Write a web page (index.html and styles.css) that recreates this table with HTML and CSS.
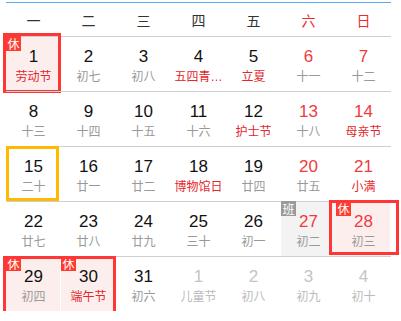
FILE: index.html
```html
<!DOCTYPE html>
<html lang="zh">
<head>
<meta charset="utf-8">
<link rel="stylesheet" href="styles.css">
</head>
<body>
<div class="cal">
  <div class="head">
    <span>一</span><span>二</span><span>三</span><span>四</span><span>五</span><span class="we">六</span><span class="we">日</span>
  </div>
  <div class="week">
    <div class="day hol"><span class="tag">休</span><b class="num">1</b><span class="lun fest">劳动节</span></div>
    <div class="day"><b class="num">2</b><span class="lun">初七</span></div>
    <div class="day"><b class="num">3</b><span class="lun">初八</span></div>
    <div class="day"><b class="num">4</b><span class="lun fest" title="五四青年节">五四青…</span></div>
    <div class="day"><b class="num">5</b><span class="lun fest">立夏</span></div>
    <div class="day wknd"><b class="num">6</b><span class="lun">十一</span></div>
    <div class="day wknd"><b class="num">7</b><span class="lun">十二</span></div>
    <i class="box box-a"></i>
  </div>
  <div class="week">
    <div class="day"><b class="num">8</b><span class="lun">十三</span></div>
    <div class="day"><b class="num">9</b><span class="lun">十四</span></div>
    <div class="day"><b class="num">10</b><span class="lun">十五</span></div>
    <div class="day"><b class="num">11</b><span class="lun">十六</span></div>
    <div class="day"><b class="num">12</b><span class="lun fest">护士节</span></div>
    <div class="day wknd"><b class="num">13</b><span class="lun">十八</span></div>
    <div class="day wknd"><b class="num">14</b><span class="lun fest">母亲节</span></div>
  </div>
  <div class="week">
    <div class="day"><b class="num">15</b><span class="lun">二十</span></div>
    <div class="day"><b class="num">16</b><span class="lun">廿一</span></div>
    <div class="day"><b class="num">17</b><span class="lun">廿二</span></div>
    <div class="day"><b class="num">18</b><span class="lun fest">博物馆日</span></div>
    <div class="day"><b class="num">19</b><span class="lun">廿四</span></div>
    <div class="day wknd"><b class="num">20</b><span class="lun">廿五</span></div>
    <div class="day wknd"><b class="num">21</b><span class="lun fest">小满</span></div>
    <i class="today-box"></i>
  </div>
  <div class="week">
    <div class="day"><b class="num">22</b><span class="lun">廿七</span></div>
    <div class="day"><b class="num">23</b><span class="lun">廿八</span></div>
    <div class="day"><b class="num">24</b><span class="lun">廿九</span></div>
    <div class="day"><b class="num">25</b><span class="lun">三十</span></div>
    <div class="day"><b class="num">26</b><span class="lun">初一</span></div>
    <div class="day wknd work"><span class="tag tag-work">班</span><b class="num">27</b><span class="lun">初二</span></div>
    <div class="day wknd hol"><span class="tag">休</span><b class="num">28</b><span class="lun">初三</span></div>
    <i class="box box-b"></i>
  </div>
  <div class="week">
    <div class="day hol"><span class="tag">休</span><b class="num">29</b><span class="lun">初四</span></div>
    <div class="day hol"><span class="tag">休</span><b class="num">30</b><span class="lun fest">端午节</span></div>
    <div class="day"><b class="num">31</b><span class="lun">初六</span></div>
    <div class="day other"><b class="num">1</b><span class="lun">儿童节</span></div>
    <div class="day other"><b class="num">2</b><span class="lun">初八</span></div>
    <div class="day other"><b class="num">3</b><span class="lun">初九</span></div>
    <div class="day other"><b class="num">4</b><span class="lun">初十</span></div>
    <i class="box box-c"></i>
  </div>
</div>
</body>
</html>
```

FILE: styles.css
```css
html, body {
  margin: 0;
  background: #fff;
}
body {
  font-family: "Liberation Sans", Arial, "Noto Sans CJK SC", sans-serif;
}
.cal {
  margin-left: 6px;
  width: 385px;
  padding-top: 2px;
}
.head {
  display: grid;
  grid-template-columns: repeat(7, 55px);
  height: 33px;
  border-top: 1px solid #56a8f5;
  align-items: center;
  text-align: center;
  font-family: "Noto Sans CJK SC", sans-serif;
  font-size: 14px;
  color: #333;
}
.head .we {
  color: #ee2a2a;
}
.week {
  position: relative;
  display: grid;
  grid-template-columns: repeat(7, 55px);
  height: 54px;
  border-top: 1px solid #cfcfcf;
}
.day {
  position: relative;
  display: flex;
  flex-direction: column;
  align-items: center;
  padding-top: 10px;
  min-width: 0;
}
.num {
  font-weight: normal;
  font-size: 17px;
  line-height: 20px;
  color: #111;
}
.lun {
  margin-top: 2px;
  font-family: "Liberation Sans", "Noto Sans CJK SC", sans-serif;
  font-size: 12px;
  line-height: 16px;
  color: #999;
  white-space: nowrap;
}
.lun.fest {
  color: #e5262b;
}
.wknd .num {
  color: #f03a3e;
}
.other .num {
  color: #c4c4c4;
}
.other .lun {
  color: #bbb;
}
.hol {
  background: #fdeeee;
  box-shadow: inset -1px 0 #fff;
}
.work {
  background: #f3f3f3;
}
.tag {
  position: absolute;
  top: -1px;
  left: 0;
  width: 15px;
  height: 15px;
  background: #ff3b30;
  color: #fff;
  font-family: "Noto Sans CJK SC", sans-serif;
  font-size: 12px;
  line-height: 15px;
  text-align: center;
}
.tag-work {
  background: #9a9a9a;
}
.box, .today-box {
  position: absolute;
  box-sizing: border-box;
  border: 3px solid #ff3636;
  pointer-events: none;
}
.box-a {
  left: -3px;
  top: -4px;
  width: 58px;
  height: 60px;
}
.box-b {
  left: 323px;
  top: -2px;
  width: 70px;
  height: 55px;
}
.box-c {
  left: -3px;
  top: -1px;
  width: 113px;
  height: 59px;
}
.today-box {
  left: 0;
  top: -1px;
  width: 53px;
  height: 55px;
  border-color: #ffb900;
}
```
